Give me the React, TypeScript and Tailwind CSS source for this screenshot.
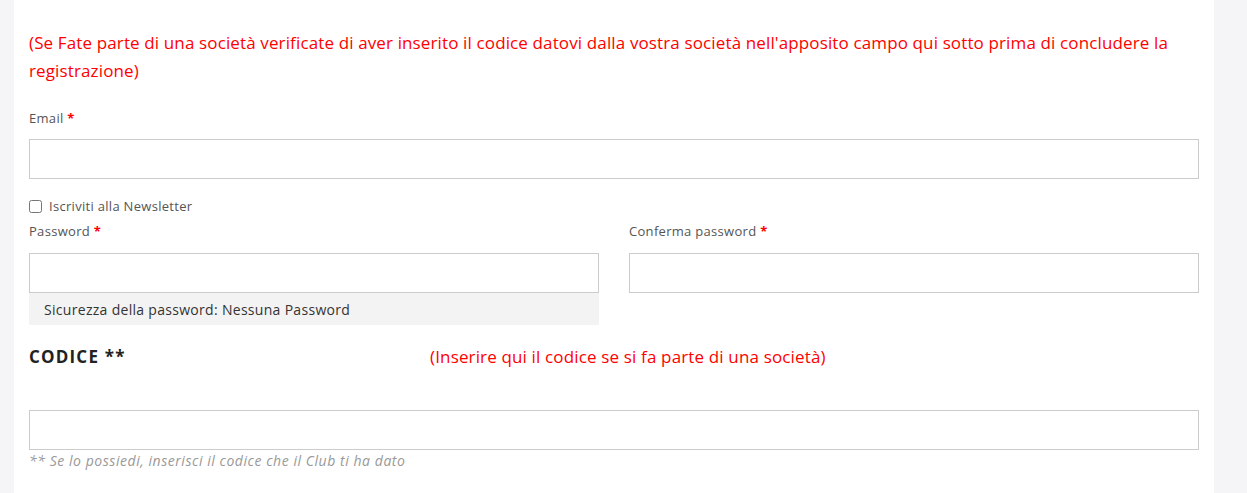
import React from "react";

const font = { fontFamily: "'Open Sans', 'Liberation Sans', sans-serif" };

function Label({ children }: { children: React.ReactNode }) {
  return (
    <label className="block text-[13px] leading-[20px] tracking-[0.3px] text-[#555]">
      {children} <span className="font-bold text-[#ff0000]">*</span>
    </label>
  );
}

function Field() {
  return <input type="text" className="block h-[40px] w-full border border-[#ccc] bg-white px-3 outline-none" />;
}

export default function App() {
  return (
    <div className="flex h-[493px] w-full bg-[#f5f5f7]" style={font}>
      <div className="ml-[14px] w-[1200px] overflow-hidden bg-white px-[15px] pt-[29px]">
        <p className="text-[17px] leading-[28px] tracking-[0.13px] text-[#ff0000]">
          (Se Fate parte di una società verificate di aver inserito il codice datovi dalla vostra società nell'apposito campo qui sotto prima di concludere la registrazione)
        </p>

        <div className="mt-[23px]">
          <Label>Email</Label>
          <div className="mt-[11px]">
            <Field />
          </div>
        </div>

        <label className="mt-[17px] flex items-center gap-[7px] text-[13px] leading-[20px] tracking-[0.3px] text-[#555]">
          <input type="checkbox" className="h-[13px] w-[13px] rounded-[2px] border border-[#888]" />
          Iscriviti alla Newsletter
        </label>

        <div className="mt-[5px] grid grid-cols-2 gap-[30px]">
          <div>
            <Label>Password</Label>
            <div className="mt-[12px]">
              <Field />
            </div>
            <div className="flex h-[32px] items-center bg-[#f3f3f3] px-[15px] text-[14px] tracking-[0.3px] text-[#333]">
              Sicurezza della password: Nessuna Password
            </div>
          </div>
          <div>
            <Label>Conferma password</Label>
            <div className="mt-[12px]">
              <Field />
            </div>
          </div>
        </div>

        <div className="mt-[19px] flex items-center">
          <h3 className="w-[401px] text-[17px] font-bold leading-[26px] tracking-[1.2px] text-[#222]">CODICE **</h3>
          <span className="text-[17px] leading-[26px] tracking-[0.15px] text-[#ff0000]">(Inserire qui il codice se si fa parte di una società)</span>
        </div>

        <div className="mt-[40px]">
          <Field />
        </div>
        <p className="text-[14px] italic leading-[22px] tracking-[0.55px] text-[#999]">
          ** Se lo possiedi, inserisci il codice che il Club ti ha dato
        </p>
      </div>
    </div>
  );
}
